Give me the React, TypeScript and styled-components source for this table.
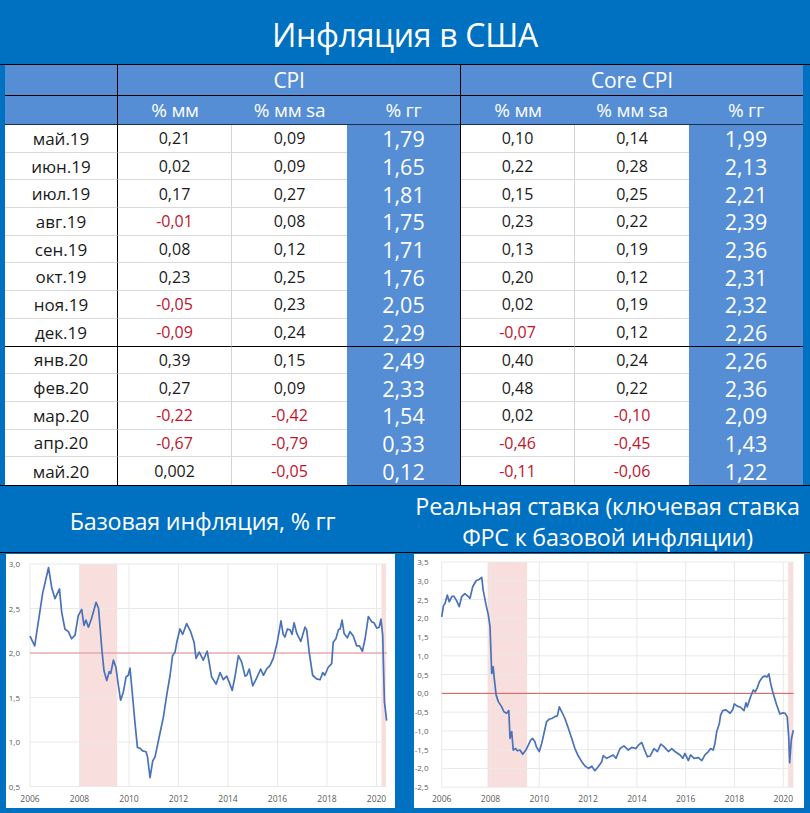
import React from "react";
import styled, { createGlobalStyle } from "styled-components";

const GlobalStyle = createGlobalStyle`
  html, body { margin: 0; padding: 0; background: #0070c0; }
  body { font-family: "Open Sans", "Noto Sans", sans-serif; }
`;

const DARK_BLUE = "#0070c0";
const MID_BLUE = "#558ed5";
const RED = "#c0142c";

const Page = styled.div`
  width: 810px;
  height: 813px;
  background: ${DARK_BLUE};
  overflow: hidden;
`;

const TitleBar = styled.h1`
  margin: 0;
  height: 64px;
  display: flex;
  align-items: center;
  justify-content: center;
  padding-top: 4px;
  box-sizing: border-box;
  color: #fff;
  font-weight: 400;
  font-size: 32px;
  letter-spacing: -0.3px;
`;

const TableFrame = styled.div`
  border-top: 1px solid #000;
  border-bottom: 1px solid #000;
  padding: 0 7px 0 5px;
`;

const Grid = styled.div`
  display: grid;
  grid-template-columns: 113px 114px 115px 114px 114px 114px 114px;
  grid-template-rows: 31px 29px repeat(13, 27.69px);
`;

const HeadCell = styled.div<{ $span?: number; $sep?: boolean; $last?: boolean; $big?: boolean }>`
  grid-column: span ${(p) => p.$span ?? 1};
  box-sizing: border-box;
  background: ${MID_BLUE};
  color: #fff;
  display: flex;
  align-items: center;
  justify-content: center;
  font-size: ${(p) => (p.$big ? "21px" : "19px")};
  letter-spacing: -0.2px;
  border-right: ${(p) => (p.$sep ? "1px solid #000" : "none")};
  border-bottom: 1px solid ${(p) => (p.$last ? "#1d2f45" : "#000")};
`;

type Kind = "label" | "white" | "blue";

const Cell = styled.div<{ $kind: Kind; $right?: "black" | "grey"; $bottom: "black" | "grey" | "none"; $neg?: boolean }>`
  box-sizing: border-box;
  display: flex;
  align-items: center;
  justify-content: center;
  background: ${(p) => (p.$kind === "blue" ? MID_BLUE : "#fff")};
  color: ${(p) => (p.$kind === "blue" ? "#fff" : p.$neg ? RED : "#1a1a1a")};
  font-size: ${(p) => (p.$kind === "blue" ? "21.5px" : p.$kind === "label" ? "17px" : "16px")};
  border-right: ${(p) =>
    p.$right === "black" ? "1px solid #000" : p.$right === "grey" ? "1px solid #d4d4d4" : "none"};
  border-bottom: ${(p) =>
    p.$bottom === "black"
      ? "1px solid #000"
      : p.$bottom === "grey"
      ? p.$kind === "blue"
        ? "none"
        : "1px solid #dadada"
      : "none"};
`;

const rows: string[][] = [
  ["май.19", "0,21", "0,09", "1,79", "0,10", "0,14", "1,99"],
  ["июн.19", "0,02", "0,09", "1,65", "0,22", "0,28", "2,13"],
  ["июл.19", "0,17", "0,27", "1,81", "0,15", "0,25", "2,21"],
  ["авг.19", "-0,01", "0,08", "1,75", "0,23", "0,22", "2,39"],
  ["сен.19", "0,08", "0,12", "1,71", "0,13", "0,19", "2,36"],
  ["окт.19", "0,23", "0,25", "1,76", "0,20", "0,12", "2,31"],
  ["ноя.19", "-0,05", "0,23", "2,05", "0,02", "0,19", "2,32"],
  ["дек.19", "-0,09", "0,24", "2,29", "-0,07", "0,12", "2,26"],
  ["янв.20", "0,39", "0,15", "2,49", "0,40", "0,24", "2,26"],
  ["фев.20", "0,27", "0,09", "2,33", "0,48", "0,22", "2,36"],
  ["мар.20", "-0,22", "-0,42", "1,54", "0,02", "-0,10", "2,09"],
  ["апр.20", "-0,67", "-0,79", "0,33", "-0,46", "-0,45", "1,43"],
  ["май.20", "0,002", "-0,05", "0,12", "-0,11", "-0,06", "1,22"],
];

const colKinds: Kind[] = ["label", "white", "white", "blue", "white", "white", "blue"];
const colRight: ("black" | "grey" | undefined)[] = ["black", "grey", undefined, "black", "grey", undefined, undefined];

const BottomTitles = styled.div`
  display: grid;
  grid-template-columns: 405px 405px;
  height: 67px;
  box-sizing: border-box;
  border-bottom: 1px solid #000;
`;

const ChartTitle = styled.h2`
  margin: 0;
  display: flex;
  align-items: center;
  justify-content: center;
  text-align: center;
  color: #fff;
  font-weight: 400;
  font-size: 23.3px;
  line-height: 31px;
  letter-spacing: -0.2px;
  padding-top: 5px;
`;

const ChartRow = styled.div`
  display: grid;
  grid-template-columns: 405px 405px;
  padding-top: 1px;
`;

const ChartCard = styled.div<{ $offset: number; $w: number }>`
  margin-left: ${(p) => p.$offset}px;
  width: ${(p) => p.$w}px;
  height: 254px;
  background: #fff;
  svg { display: block; }
`;

type Pt = [number, number];

// Core CPI y/y, t = years since Jan 2006
const coreData: Pt[] = [
  [0, 2.19], [0.19, 2.08], [0.51, 2.67], [0.75, 2.96], [0.88, 2.73], [1.01, 2.61], [1.19, 2.72],
  [1.28, 2.46], [1.41, 2.27], [1.55, 2.24], [1.68, 2.16], [1.82, 2.2], [1.95, 2.42], [2.09, 2.49],
  [2.18, 2.31], [2.26, 2.37], [2.36, 2.29], [2.49, 2.39], [2.67, 2.57], [2.77, 2.5], [2.9, 2.05],
  [2.99, 1.8], [3.1, 1.69], [3.2, 1.79], [3.26, 1.77], [3.37, 1.92], [3.47, 1.84], [3.57, 1.64],
  [3.66, 1.47], [3.77, 1.56], [3.88, 1.73], [3.97, 1.75], [4.04, 1.83], [4.15, 1.5], [4.24, 1.22],
  [4.34, 0.94], [4.44, 0.93], [4.55, 0.9], [4.69, 0.89], [4.75, 0.83], [4.85, 0.6], [4.96, 0.79],
  [5.05, 0.83], [5.23, 1.07], [5.39, 1.28], [5.52, 1.52], [5.66, 1.75], [5.76, 1.97], [5.86, 2.01],
  [5.93, 2.12], [6.06, 2.27], [6.17, 2.21], [6.33, 2.33], [6.49, 2.24], [6.63, 2.12], [6.71, 1.94],
  [6.84, 2.01], [7.0, 1.92], [7.16, 2.02], [7.34, 1.73], [7.52, 1.65], [7.68, 1.78], [7.81, 1.7],
  [7.95, 1.74], [8.05, 1.67], [8.17, 1.58], [8.28, 1.73], [8.42, 1.97], [8.55, 1.9], [8.69, 1.74],
  [8.76, 1.75], [8.86, 1.82], [9.0, 1.63], [9.16, 1.72], [9.32, 1.82], [9.43, 1.75], [9.56, 1.82],
  [9.7, 1.86], [9.83, 1.94], [9.99, 2.12], [10.14, 2.36], [10.23, 2.21], [10.3, 2.18], [10.4, 2.27],
  [10.51, 2.26], [10.59, 2.21], [10.67, 2.34], [10.78, 2.22], [10.94, 2.13], [11.11, 2.29],
  [11.18, 2.26], [11.28, 2.01], [11.42, 1.75], [11.58, 1.71], [11.72, 1.7], [11.83, 1.78],
  [11.91, 1.75], [12.05, 1.84], [12.19, 1.88], [12.25, 2.12], [12.36, 2.16], [12.46, 2.26],
  [12.53, 2.27], [12.61, 2.37], [12.69, 2.22], [12.82, 2.17], [12.93, 2.24], [13.06, 2.19],
  [13.2, 2.08], [13.31, 2.08], [13.43, 2.02], [13.54, 2.16], [13.67, 2.41], [13.81, 2.35],
  [13.9, 2.34], [14.01, 2.28], [14.11, 2.29], [14.18, 2.38], [14.25, 2.2], [14.32, 1.45], [14.41, 1.24],
];

// Real rate: Fed funds minus core inflation
const realData: Pt[] = [
  [0, 2.04], [0.07, 2.33], [0.14, 2.4], [0.23, 2.62], [0.31, 2.44], [0.41, 2.58], [0.5, 2.59],
  [0.61, 2.47], [0.72, 2.31], [0.82, 2.58], [0.95, 2.66], [1.09, 2.58], [1.16, 2.53], [1.27, 2.84],
  [1.41, 3.0], [1.54, 3.04], [1.64, 3.09], [1.7, 2.75], [1.82, 2.35], [1.91, 2.09], [1.98, 1.78],
  [2.05, 0.53], [2.11, 0.71], [2.16, 0.36], [2.23, -0.04], [2.32, -0.22], [2.46, -0.36],
  [2.55, -0.49], [2.66, -0.53], [2.75, -0.46], [2.8, -1.2], [2.87, -1.02], [2.93, -1.51],
  [3.03, -1.47], [3.1, -1.53], [3.21, -1.51], [3.32, -1.62], [3.45, -1.51], [3.55, -1.38],
  [3.65, -1.24], [3.73, -1.2], [3.82, -1.29], [3.89, -1.44], [4.0, -1.55], [4.1, -1.33],
  [4.19, -1.07], [4.3, -0.75], [4.4, -0.69], [4.51, -0.67], [4.64, -0.62], [4.74, -0.6],
  [4.82, -0.36], [4.92, -0.49], [5.05, -0.67], [5.19, -0.93], [5.33, -1.2], [5.46, -1.47],
  [5.6, -1.67], [5.74, -1.82], [5.88, -1.94], [6.01, -2.0], [6.15, -1.94], [6.28, -2.06],
  [6.42, -1.95], [6.56, -1.82], [6.62, -1.66], [6.76, -1.73], [6.89, -1.69], [7.03, -1.64],
  [7.14, -1.73], [7.31, -1.47], [7.47, -1.4], [7.65, -1.51], [7.79, -1.44], [7.96, -1.47],
  [8.06, -1.38], [8.2, -1.31], [8.29, -1.47], [8.43, -1.69], [8.54, -1.67], [8.7, -1.47],
  [8.84, -1.55], [8.98, -1.35], [9.11, -1.42], [9.29, -1.55], [9.43, -1.47], [9.56, -1.55],
  [9.77, -1.64], [9.88, -1.73], [9.97, -1.6], [10.11, -1.79], [10.2, -1.64], [10.34, -1.73],
  [10.52, -1.71], [10.66, -1.79], [10.79, -1.64], [10.93, -1.55], [11.02, -1.47], [11.13, -1.51],
  [11.2, -1.33], [11.27, -1.02], [11.38, -0.8], [11.43, -0.58], [11.52, -0.46], [11.65, -0.44],
  [11.82, -0.53], [11.93, -0.43], [11.99, -0.28], [12.11, -0.34], [12.25, -0.37], [12.39, -0.46],
  [12.47, -0.25], [12.52, -0.36], [12.66, -0.09], [12.77, 0.09], [12.85, 0.04], [12.94, 0.16],
  [13.02, 0.31], [13.16, 0.44], [13.25, 0.46], [13.34, 0.44], [13.41, 0.52], [13.48, 0.27],
  [13.59, -0.02], [13.73, -0.31], [13.86, -0.55], [13.98, -0.52], [14.07, -0.53], [14.16, -0.62],
  [14.22, -1.15], [14.26, -1.85], [14.33, -1.23], [14.41, -0.98],
];

type ChartProps = {
  width: number;
  height: number;
  plotLeft: number;
  pxPerYear: number;
  endT: number;
  vTop: number;
  vBottom: number;
  yTop: number;
  yBottom: number;
  step: number;
  labelX: number;
  refValue: number;
  refColor: string;
  shades: [number, number][];
  data: Pt[];
};

const fmt = (v: number) => (Math.abs(v) < 1e-9 ? "0,0" : v.toFixed(1).replace(".", ","));

const LineChart: React.FC<ChartProps> = (p) => {
  const x = (t: number) => p.plotLeft + t * p.pxPerYear;
  const y = (v: number) => p.yTop + ((p.vTop - v) / (p.vTop - p.vBottom)) * (p.yBottom - p.yTop);
  const ticks: number[] = [];
  for (let v = p.vTop; v >= p.vBottom - 1e-9; v -= p.step) ticks.push(Math.round(v * 10) / 10);
  const years = [2006, 2008, 2010, 2012, 2014, 2016, 2018, 2020];
  const right = x(p.endT);
  const path = p.data.map(([t, v], i) => `${i ? "L" : "M"}${x(t).toFixed(2)},${y(v).toFixed(2)}`).join(" ");
  return (
    <svg width={p.width} height={p.height} viewBox={`0 0 ${p.width} ${p.height}`}>
      {p.shades.map(([a, b], i) => (
        <rect key={i} x={x(a)} y={p.yTop} width={x(b) - x(a)} height={p.yBottom - p.yTop} fill="#f9dede" />
      ))}
      {ticks.map((v) => (
        <line key={"h" + v} x1={p.plotLeft} x2={right} y1={y(v)} y2={y(v)} stroke="#e9e9e9" strokeWidth={1} />
      ))}
      {years.map((yr) => (
        <line key={"v" + yr} x1={x(yr - 2006)} x2={x(yr - 2006)} y1={p.yTop} y2={p.yBottom} stroke="#e9e9e9" strokeWidth={1} />
      ))}
      <line x1={p.plotLeft} x2={right} y1={y(p.refValue)} y2={y(p.refValue)} stroke={p.refColor} strokeWidth={1} />
      <path d={path} fill="none" stroke="#4a72b8" strokeWidth={1.7} strokeLinejoin="round" />
      {ticks.map((v) => (
        <text key={"l" + v} x={p.labelX} y={y(v) + 3} textAnchor="end" fontSize={8} fill="#5a5a5a" fontFamily="Open Sans, sans-serif">
          {fmt(v)}
        </text>
      ))}
      {years.map((yr) => (
        <text key={"y" + yr} x={x(yr - 2006)} y={p.height - 6} textAnchor="middle" fontSize={8.5} fill="#5a5a5a" fontFamily="Open Sans, sans-serif">
          {yr}
        </text>
      ))}
    </svg>
  );
};

export default function App() {
  return (
    <Page>
      <GlobalStyle />
      <TitleBar>Инфляция в США</TitleBar>
      <TableFrame>
        <Grid>
          <HeadCell $sep />
          <HeadCell $span={3} $sep $big>CPI</HeadCell>
          <HeadCell $span={3} $big>Core CPI</HeadCell>
          <HeadCell $sep $last />
          <HeadCell $last>% мм</HeadCell>
          <HeadCell $last>% мм sa</HeadCell>
          <HeadCell $last $sep>% гг</HeadCell>
          <HeadCell $last>% мм</HeadCell>
          <HeadCell $last>% мм sa</HeadCell>
          <HeadCell $last>% гг</HeadCell>
          {rows.map((r, ri) =>
            r.map((v, ci) => (
              <Cell
                key={ri + "-" + ci}
                $kind={colKinds[ci]}
                $right={colRight[ci]}
                $bottom={ri === 7 ? "black" : ri === rows.length - 1 ? "none" : "grey"}
                $neg={v.startsWith("-")}
              >
                {v}
              </Cell>
            ))
          )}
        </Grid>
      </TableFrame>
      <BottomTitles>
        <ChartTitle>Базовая инфляция, % гг</ChartTitle>
        <ChartTitle>
          Реальная ставка (ключевая ставка
          <br />
          ФРС к базовой инфляции)
        </ChartTitle>
      </BottomTitles>
      <ChartRow>
        <ChartCard $offset={6} $w={389}>
          <LineChart
            width={389}
            height={254}
            plotLeft={24}
            pxPerYear={24.75}
            endT={14.42}
            vTop={3.0}
            vBottom={0.5}
            yTop={10}
            yBottom={232.5}
            step={0.5}
            labelX={14}
            refValue={2.0}
            refColor="#e68a92"
            shades={[[1.98, 3.52], [14.2, 14.38]]}
            data={coreData}
          />
        </ChartCard>
        <ChartCard $offset={9} $w={390}>
          <LineChart
            width={390}
            height={254}
            plotLeft={27.7}
            pxPerYear={24.4}
            endT={14.42}
            vTop={3.5}
            vBottom={-2.5}
            yTop={8}
            yBottom={233.2}
            step={0.5}
            labelX={14.5}
            refValue={0}
            refColor="#d25a5a"
            shades={[[1.88, 3.5], [14.2, 14.41]]}
            data={realData}
          />
        </ChartCard>
      </ChartRow>
    </Page>
  );
}
